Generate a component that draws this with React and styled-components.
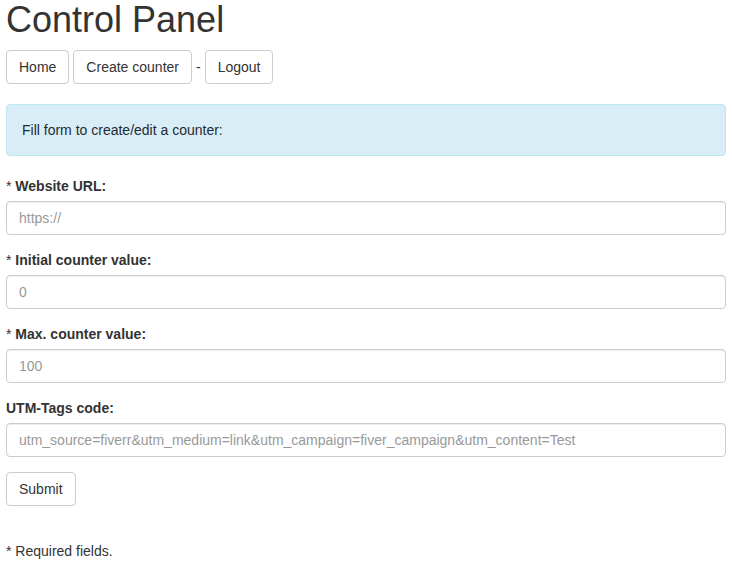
import React from "react"
import styled, { createGlobalStyle } from "styled-components"

const GlobalStyle = createGlobalStyle`
  * {
    box-sizing: border-box;
  }
  body {
    margin: 0;
    background: #fff;
    color: #333;
    font-family: "Liberation Sans", Arial, Helvetica, sans-serif;
    font-size: 14px;
    line-height: 1.42857143;
  }
`

const Page = styled.div`
  padding: 0 6px;
`

const Title = styled.h1`
  margin: 0;
  font-size: 36px;
  font-weight: 500;
  line-height: 40px;
  color: #333;
`

const Nav = styled.nav`
  display: flex;
  align-items: center;
  gap: 4px;
  margin-top: 10px;
`

const Button = styled.button`
  display: inline-block;
  height: 34px;
  padding: 6px 12px;
  font-family: inherit;
  font-size: 14px;
  line-height: 20px;
  color: #333;
  background: #fff;
  border: 1px solid #ccc;
  border-radius: 4px;
  cursor: pointer;
`

const Sep = styled.span`
  color: #333;
`

const Alert = styled.div`
  margin-top: 20px;
  padding: 15px;
  background: #d9edf7;
  border: 1px solid #bce8f1;
  border-radius: 4px;
  color: #1f2b33;
`

const Form = styled.form`
  margin-top: 20px;
`

const Group = styled.div`
  margin-bottom: 15px;
`

const Label = styled.label`
  display: block;
  margin-bottom: 5px;
  font-weight: bold;
  color: #333;
`

const Star = styled.span`
  font-weight: normal;
`

const Input = styled.input`
  display: block;
  width: 100%;
  height: 34px;
  padding: 6px 12px;
  font-family: inherit;
  font-size: 14px;
  line-height: 20px;
  color: #555;
  background: #fff;
  border: 1px solid #ccc;
  border-radius: 4px;
  box-shadow: inset 0 1px 1px rgba(0, 0, 0, 0.075);
  outline: none;

  &::placeholder {
    color: #999;
  }
`

const Note = styled.p`
  margin: 35px 0 0;
`

const fields = [
  { label: "Website URL:", required: true, placeholder: "https://" },
  { label: "Initial counter value:", required: true, placeholder: "0" },
  { label: "Max. counter value:", required: true, placeholder: "100" },
  {
    label: "UTM-Tags code:",
    required: false,
    placeholder:
      "utm_source=fiverr&utm_medium=link&utm_campaign=fiver_campaign&utm_content=Test",
  },
]

const App = () => {
  return (
    <Page>
      <GlobalStyle />
      <Title>Control Panel</Title>
      <Nav>
        <Button>Home</Button>
        <Button>Create counter</Button>
        <Sep>-</Sep>
        <Button>Logout</Button>
      </Nav>
      <Alert>Fill form to create/edit a counter:</Alert>
      <Form onSubmit={e => e.preventDefault()}>
        {fields.map(f => (
          <Group key={f.label}>
            <Label>
              {f.required && <Star>* </Star>}
              {f.label}
            </Label>
            <Input type="text" placeholder={f.placeholder} />
          </Group>
        ))}
        <Button type="submit">Submit</Button>
      </Form>
      <Note>* Required fields.</Note>
    </Page>
  )
}

export default App
